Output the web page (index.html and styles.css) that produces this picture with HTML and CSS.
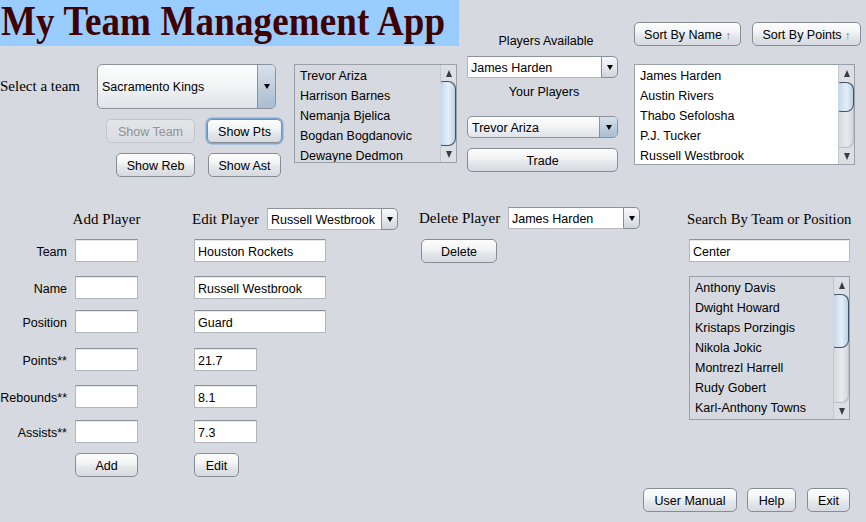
FILE: index.html
```html
<!DOCTYPE html>
<html>
<head>
<meta charset="utf-8">
<title>My Team Management App</title>
<link rel="stylesheet" href="styles.css">
</head>
<body>
<div class="app">
  <div class="top">
    <div class="left">
      <div class="title"><span class="title-text">My Team Management App</span></div>
      <div class="team-row">
        <div class="team-ctrl">
          <div class="select-row">
            <span class="serif-label select-label">Select a team</span>
            <div class="combo combo-big"><span class="combo-value">Sacramento Kings</span><span class="combo-arrow"><i class="tri-down"></i></span></div>
          </div>
          <div class="btn-row row1">
            <button class="btn disabled w-team">Show Team</button>
            <button class="btn focused w-pts">Show Pts</button>
          </div>
          <div class="btn-row row2">
            <button class="btn w-reb">Show Reb</button>
            <button class="btn w-ast">Show Ast</button>
          </div>
        </div>
        <div class="list list-gray list1">
          <ul class="items">
            <li>Trevor Ariza</li>
            <li>Harrison Barnes</li>
            <li>Nemanja Bjelica</li>
            <li>Bogdan Bogdanovic</li>
            <li>Dewayne Dedmon</li>
          </ul>
          <div class="vscroll">
            <div class="sb-btn"><i class="tri-up"></i></div>
            <div class="sb-track"><div class="sb-thumb thumb-1"></div></div>
            <div class="sb-btn"><i class="tri-dn"></i></div>
          </div>
        </div>
      </div>
    </div>

    <div class="trade-col">
      <div class="small-label avail-label">Players Available</div>
      <div class="ecombo ecombo-top"><span class="ecombo-field">James Harden</span><span class="ecombo-btn"><i class="tri-down"></i></span></div>
      <div class="small-label your-label">Your Players</div>
      <div class="combo combo-yours"><span class="combo-value">Trevor Ariza</span><span class="combo-arrow"><i class="tri-down"></i></span></div>
      <button class="btn trade-btn">Trade</button>
    </div>

    <div class="sort-col">
      <div class="sort-btns">
        <button class="btn w-sname">Sort By Name <span class="arrow-up">&#8593;</span></button>
        <button class="btn w-spts">Sort By Points <span class="arrow-up">&#8593;</span></button>
      </div>
      <div class="list list-white list3">
        <ul class="items">
          <li>James Harden</li>
          <li>Austin Rivers</li>
          <li>Thabo Sefolosha</li>
          <li>P.J. Tucker</li>
          <li>Russell Westbrook</li>
        </ul>
        <div class="vscroll">
          <div class="sb-btn"><i class="tri-up"></i></div>
          <div class="sb-track"><div class="sb-thumb thumb-3"></div></div>
          <div class="sb-btn"><i class="tri-dn"></i></div>
        </div>
      </div>
    </div>
  </div>

  <div class="bottom">
    <div class="form">
      <div class="form-head add-head"><span class="serif-label">Add Player</span></div>
      <div class="form-head edit-head">
        <span class="serif-label edit-label">Edit Player</span>
        <div class="ecombo ecombo-edit"><span class="ecombo-field">Russell Westbrook</span><span class="ecombo-btn"><i class="tri-down"></i></span></div>
      </div>

      <div class="flabel">Team</div>
      <div class="field"></div>
      <div class="field field-wide">Houston Rockets</div>

      <div class="flabel">Name</div>
      <div class="field"></div>
      <div class="field field-wide">Russell Westbrook</div>

      <div class="flabel">Position</div>
      <div class="field"></div>
      <div class="field field-wide">Guard</div>

      <div class="flabel">Points**</div>
      <div class="field"></div>
      <div class="field">21.7</div>

      <div class="flabel">Rebounds**</div>
      <div class="field"></div>
      <div class="field">8.1</div>

      <div class="flabel">Assists**</div>
      <div class="field"></div>
      <div class="field">7.3</div>

      <div class="spacer"></div>
      <button class="btn w-add">Add</button>
      <button class="btn w-edit">Edit</button>
    </div>

    <div class="delete-col">
      <div class="del-head">
        <span class="serif-label del-label">Delete Player</span>
        <div class="ecombo ecombo-del"><span class="ecombo-field">James Harden</span><span class="ecombo-btn"><i class="tri-down"></i></span></div>
      </div>
      <button class="btn w-delete">Delete</button>
    </div>

    <div class="search-col">
      <div class="serif-label search-label">Search By Team or Position</div>
      <div class="field search-field">Center</div>
      <div class="list list-gray list-search">
        <ul class="items">
          <li>Anthony Davis</li>
          <li>Dwight Howard</li>
          <li>Kristaps Porzingis</li>
          <li>Nikola Jokic</li>
          <li>Montrezl Harrell</li>
          <li>Rudy Gobert</li>
          <li>Karl-Anthony Towns</li>
        </ul>
        <div class="vscroll">
          <div class="sb-btn"><i class="tri-up"></i></div>
          <div class="sb-track"><div class="sb-thumb thumb-s"></div></div>
          <div class="sb-btn"><i class="tri-dn"></i></div>
        </div>
      </div>
    </div>
  </div>

  <div class="footer">
    <button class="btn w-manual">User Manual</button>
    <button class="btn w-help">Help</button>
    <button class="btn w-exit">Exit</button>
  </div>
</div>
</body>
</html>
```

FILE: styles.css
```css
* { box-sizing: border-box; }

body {
  margin: 0;
  background: #d6d9df;
  font-family: "Liberation Sans", Arial, sans-serif;
  font-size: 12.5px;
  color: #000;
}

.app {
  width: 866px;
  height: 522px;
  overflow: hidden;
}

/* ---------- top area ---------- */
.top {
  display: flex;
  height: 208px;
}

.left { width: 459px; }

.title {
  height: 46px;
  background: #99ccff;
  padding-left: 1px;
}

.title-text {
  display: block;
  font-family: "Liberation Serif", "Times New Roman", serif;
  font-weight: bold;
  font-size: 37px;
  line-height: 46px;
  color: #3f0000;
  white-space: nowrap;
  letter-spacing: 0.15px;
  transform: scaleY(1.15);
  transform-origin: 0 35.5px;
}

.serif-label {
  font-family: "Liberation Serif", "Times New Roman", serif;
  font-size: 15px;
  white-space: nowrap;
}

.team-row {
  display: flex;
  margin-top: 18px;
}

.team-ctrl { width: 294px; }

.select-row {
  display: flex;
  align-items: center;
  height: 45px;
}

.select-label { width: 97px; }

.combo-big { width: 179px; height: 45px; }

.btn-row {
  display: flex;
  margin-top: 10px;
}
.row1 { padding-left: 106px; gap: 12px; }
.row2 { padding-left: 116px; gap: 13px; }

.w-team { width: 89px; }
.w-pts { width: 75px; }
.w-reb { width: 79px; }
.w-ast { width: 73px; }

.list1 { width: 163px; height: 99px; }

/* trade column */
.trade-col {
  width: 151px;
  margin-left: 8px;
  padding-top: 33px;
  display: flex;
  flex-direction: column;
}

.small-label {
  height: 16px;
  line-height: 16px;
  text-align: center;
  white-space: nowrap;
}
.avail-label { padding-left: 7px; }
.your-label { margin-top: 6px; padding-left: 3px; }

.ecombo-top { margin-top: 7px; height: 22px; }
.combo-yours { margin-top: 16px; height: 22px; }
.trade-btn { margin-top: 10px; width: 151px; }

/* sort column */
.sort-col {
  margin-left: 16px;
  padding-top: 22px;
}

.sort-btns {
  display: flex;
  gap: 11px;
}
.w-sname { width: 107px; }
.w-spts { width: 109px; }
.arrow-up { color: #6b7580; font-size: 11px; }

.list3 {
  margin-top: 18px;
  width: 221px;
  height: 101px;
}

/* ---------- widgets ---------- */
.btn {
  display: block;
  height: 24px;
  padding: 1px 0 0;
  border: 1px solid #878d95;
  border-radius: 5px;
  background: linear-gradient(#fdfdfe 0%, #f3f4f6 40%, #e4e7eb 60%, #d6dae0 100%);
  font: inherit;
  color: #000;
  text-align: center;
  white-space: nowrap;
  cursor: default;
}

.btn.disabled {
  border-color: #c2c6cc;
  background: linear-gradient(#e3e5e9, #d9dce1);
  color: #8e939a;
}

.btn.focused {
  box-shadow: 0 0 0 1.5px #7ca9d6;
}

.combo {
  display: flex;
  border: 1px solid #8c9299;
  border-radius: 5px;
  background: linear-gradient(#fdfdfd, #f1f3f5 50%, #dfe3e8);
  overflow: hidden;
}

.combo-value {
  flex: 1;
  display: flex;
  align-items: center;
  padding: 1px 0 0 4px;
  white-space: nowrap;
  overflow: hidden;
}

.combo-arrow {
  width: 18px;
  border-left: 1px solid #8c9299;
  background: linear-gradient(#d7e1eb, #a9bcd0);
  display: flex;
  align-items: center;
  justify-content: center;
}

.ecombo { display: flex; }

.ecombo-field {
  flex: 1;
  display: flex;
  align-items: center;
  padding: 1px 0 0 3px;
  background: #fff;
  border: 1px solid #b3b7bd;
  border-top-color: #8e9399;
  border-right: none;
  white-space: nowrap;
  overflow: hidden;
}

.ecombo-btn {
  width: 17px;
  border: 1px solid #878d95;
  border-radius: 0 5px 5px 0;
  background: linear-gradient(#f7f8fa, #e6e9ed 50%, #cfd4db);
  display: flex;
  align-items: center;
  justify-content: center;
}

.tri-down {
  display: block;
  width: 0;
  height: 0;
  border-left: 3.5px solid transparent;
  border-right: 3.5px solid transparent;
  border-top: 5px solid #000;
}

.field {
  height: 23px;
  width: 63px;
  background: #fff;
  border: 1px solid #b3b7bd;
  border-top-color: #8e9399;
  box-shadow: inset 0 1px 0 #e6e8eb;
  padding: 2px 0 0 3px;
  line-height: 21px;
  white-space: nowrap;
  overflow: hidden;
}
.field-wide { width: 132px; }

/* lists */
.list {
  display: flex;
  border: 1px solid #9aa0a8;
}
.list-gray { background: #d6d9df; }
.list-white { background: #fff; }

.items {
  flex: 1;
  margin: 0;
  padding: 0;
  list-style: none;
  overflow: hidden;
}
.items li {
  height: 20px;
  line-height: 22px;
  padding-left: 5px;
  white-space: nowrap;
}

.vscroll {
  width: 16px;
  display: flex;
  flex-direction: column;
  background: #dcdfe3;
  border-left: 1px solid #c4c8ce;
}

.sb-btn {
  height: 16px;
  flex: none;
  display: flex;
  align-items: center;
  justify-content: center;
}

.tri-up, .tri-dn {
  display: block;
  width: 0;
  height: 0;
  border-left: 3.5px solid transparent;
  border-right: 3.5px solid transparent;
}
.tri-up { border-bottom: 7px solid #3a3d42; }
.tri-dn { border-top: 7px solid #3a3d42; }

.sb-track {
  flex: 1;
  border-radius: 0 7px 7px 0;
  background: linear-gradient(to right, #d4d7dc, #e8eaed 50%, #d0d4d9);
  box-shadow: inset -1px -1px 1px #b9bec5;
}

.sb-thumb {
  margin-top: 1px;
  margin-left: -1px;
  border: 1px solid #3e5269;
  border-left-color: #c8d9ea;
  border-radius: 3px 8px 8px 3px;
  background: linear-gradient(to right, #c6d9ec, #e5eef8 55%, #bcd1e6);
}
.thumb-1 { height: 65px; margin-top: 0; }
.thumb-3 { height: 30px; }
.thumb-s { height: 54px; }

/* ---------- bottom area ---------- */
.bottom {
  display: flex;
}

.form {
  width: 398px;
  display: grid;
  grid-template-columns: 75px 119px 204px;
  grid-template-rows: 31px 37px 34px 38px 37px 35px 33px 24px;
  align-items: start;
}

.form-head {
  height: 22px;
  line-height: 22px;
  display: flex;
}
.add-head {
  grid-column: 2;
  width: 63px;
  justify-content: center;
}
.edit-head {
  grid-column: 3;
  margin-left: -2px;
}
.edit-label { width: 75px; }
.ecombo-edit { width: 131px; height: 22px; line-height: normal; }

.flabel {
  height: 23px;
  line-height: 27px;
  text-align: right;
  padding-right: 8px;
  white-space: nowrap;
}

.w-add { width: 63px; }
.w-edit { width: 45px; }

.delete-col {
  margin-left: 21px;
  width: 221px;
}
.del-head {
  display: flex;
  height: 22px;
  margin-top: -1px;
  line-height: 22px;
}
.del-label { width: 89px; }
.ecombo-del { width: 132px; line-height: normal; }
.w-delete {
  width: 76px;
  margin-top: 10px;
  margin-left: 2px;
}

.search-col {
  margin-left: 47px;
  width: 165px;
}
.search-label {
  height: 22px;
  line-height: 22px;
  font-size: 14.7px;
}
.search-field {
  width: 161px;
  margin-top: 9px;
  margin-left: 2px;
}
.list-search {
  width: 161px;
  height: 144px;
  margin-top: 14px;
  margin-left: 2px;
}

/* footer */
.footer {
  display: flex;
  justify-content: flex-end;
  margin-top: 11px;
  padding-right: 16px;
}
.w-manual { width: 94px; }
.w-help { width: 49px; margin-left: 10px; }
.w-exit { width: 43px; margin-left: 11px; }
```
